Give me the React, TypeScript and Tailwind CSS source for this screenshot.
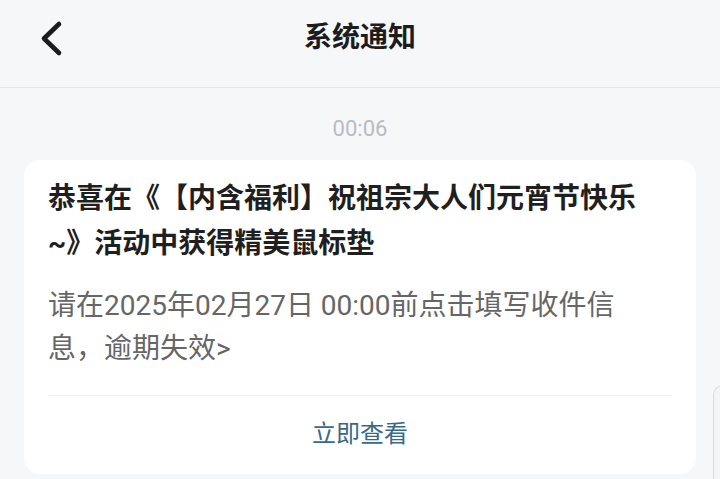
const font = { fontFamily: 'Roboto, "Noto Sans CJK SC", "Noto Sans", sans-serif' };

export default function App() {
  return (
    <div
      className="relative h-[479px] w-[720px] overflow-hidden bg-[#f6f7f9] [text-spacing-trim:space-all]"
      style={font}
    >
      <header className="relative flex h-[88px] items-center justify-center border-b border-[#e4e5e8]">
        <button className="absolute left-[36px] top-[16px] text-[#1c1c1c]">
          <svg width="32" height="46" viewBox="0 0 32 46" fill="none">
            <polyline
              points="23,8 8,22.5 23,37"
              stroke="currentColor"
              strokeWidth="4.6"
              strokeLinecap="round"
              strokeLinejoin="round"
            />
          </svg>
        </button>
        <h1 className="-mt-[12px] text-[28px] font-bold text-[#1c1c1c]">系统通知</h1>
      </header>

      <p className="mt-[27px] text-center text-[22px] leading-[28px] text-[#b9bcc1]">00:06</p>

      <div className="mx-[24px] mt-[17px] rounded-[16px] bg-white px-[24px]">
        <div className="pt-[16px]">
          <h2 className="pr-[28px] text-[28px] font-bold leading-[45px] text-[#1f1f1f]">
            恭喜在《【内含福利】祝祖宗大人们元宵节快乐~》活动中获得精美鼠标垫
          </h2>
          <p className="mt-[18px] w-[580px] break-all text-[28px] leading-[43px] text-[#666666]">
            请在2025年02月27日 00:00前点击填写收件信息，逾期失效&gt;
          </p>
        </div>
        <div className="mt-[25px] border-t border-[#eeeff1]" />
        <div className="flex h-[78px] items-center justify-center pb-[2px]">
          <span className="text-[24px] text-[#36698a]">立即查看</span>
        </div>
      </div>

      <div className="absolute left-[713px] top-[385px] h-[110px] w-[20px] rounded-tl-[10px] border-l border-t border-[#d9dadd] bg-[#f3f4f6]" />
    </div>
  );
}
